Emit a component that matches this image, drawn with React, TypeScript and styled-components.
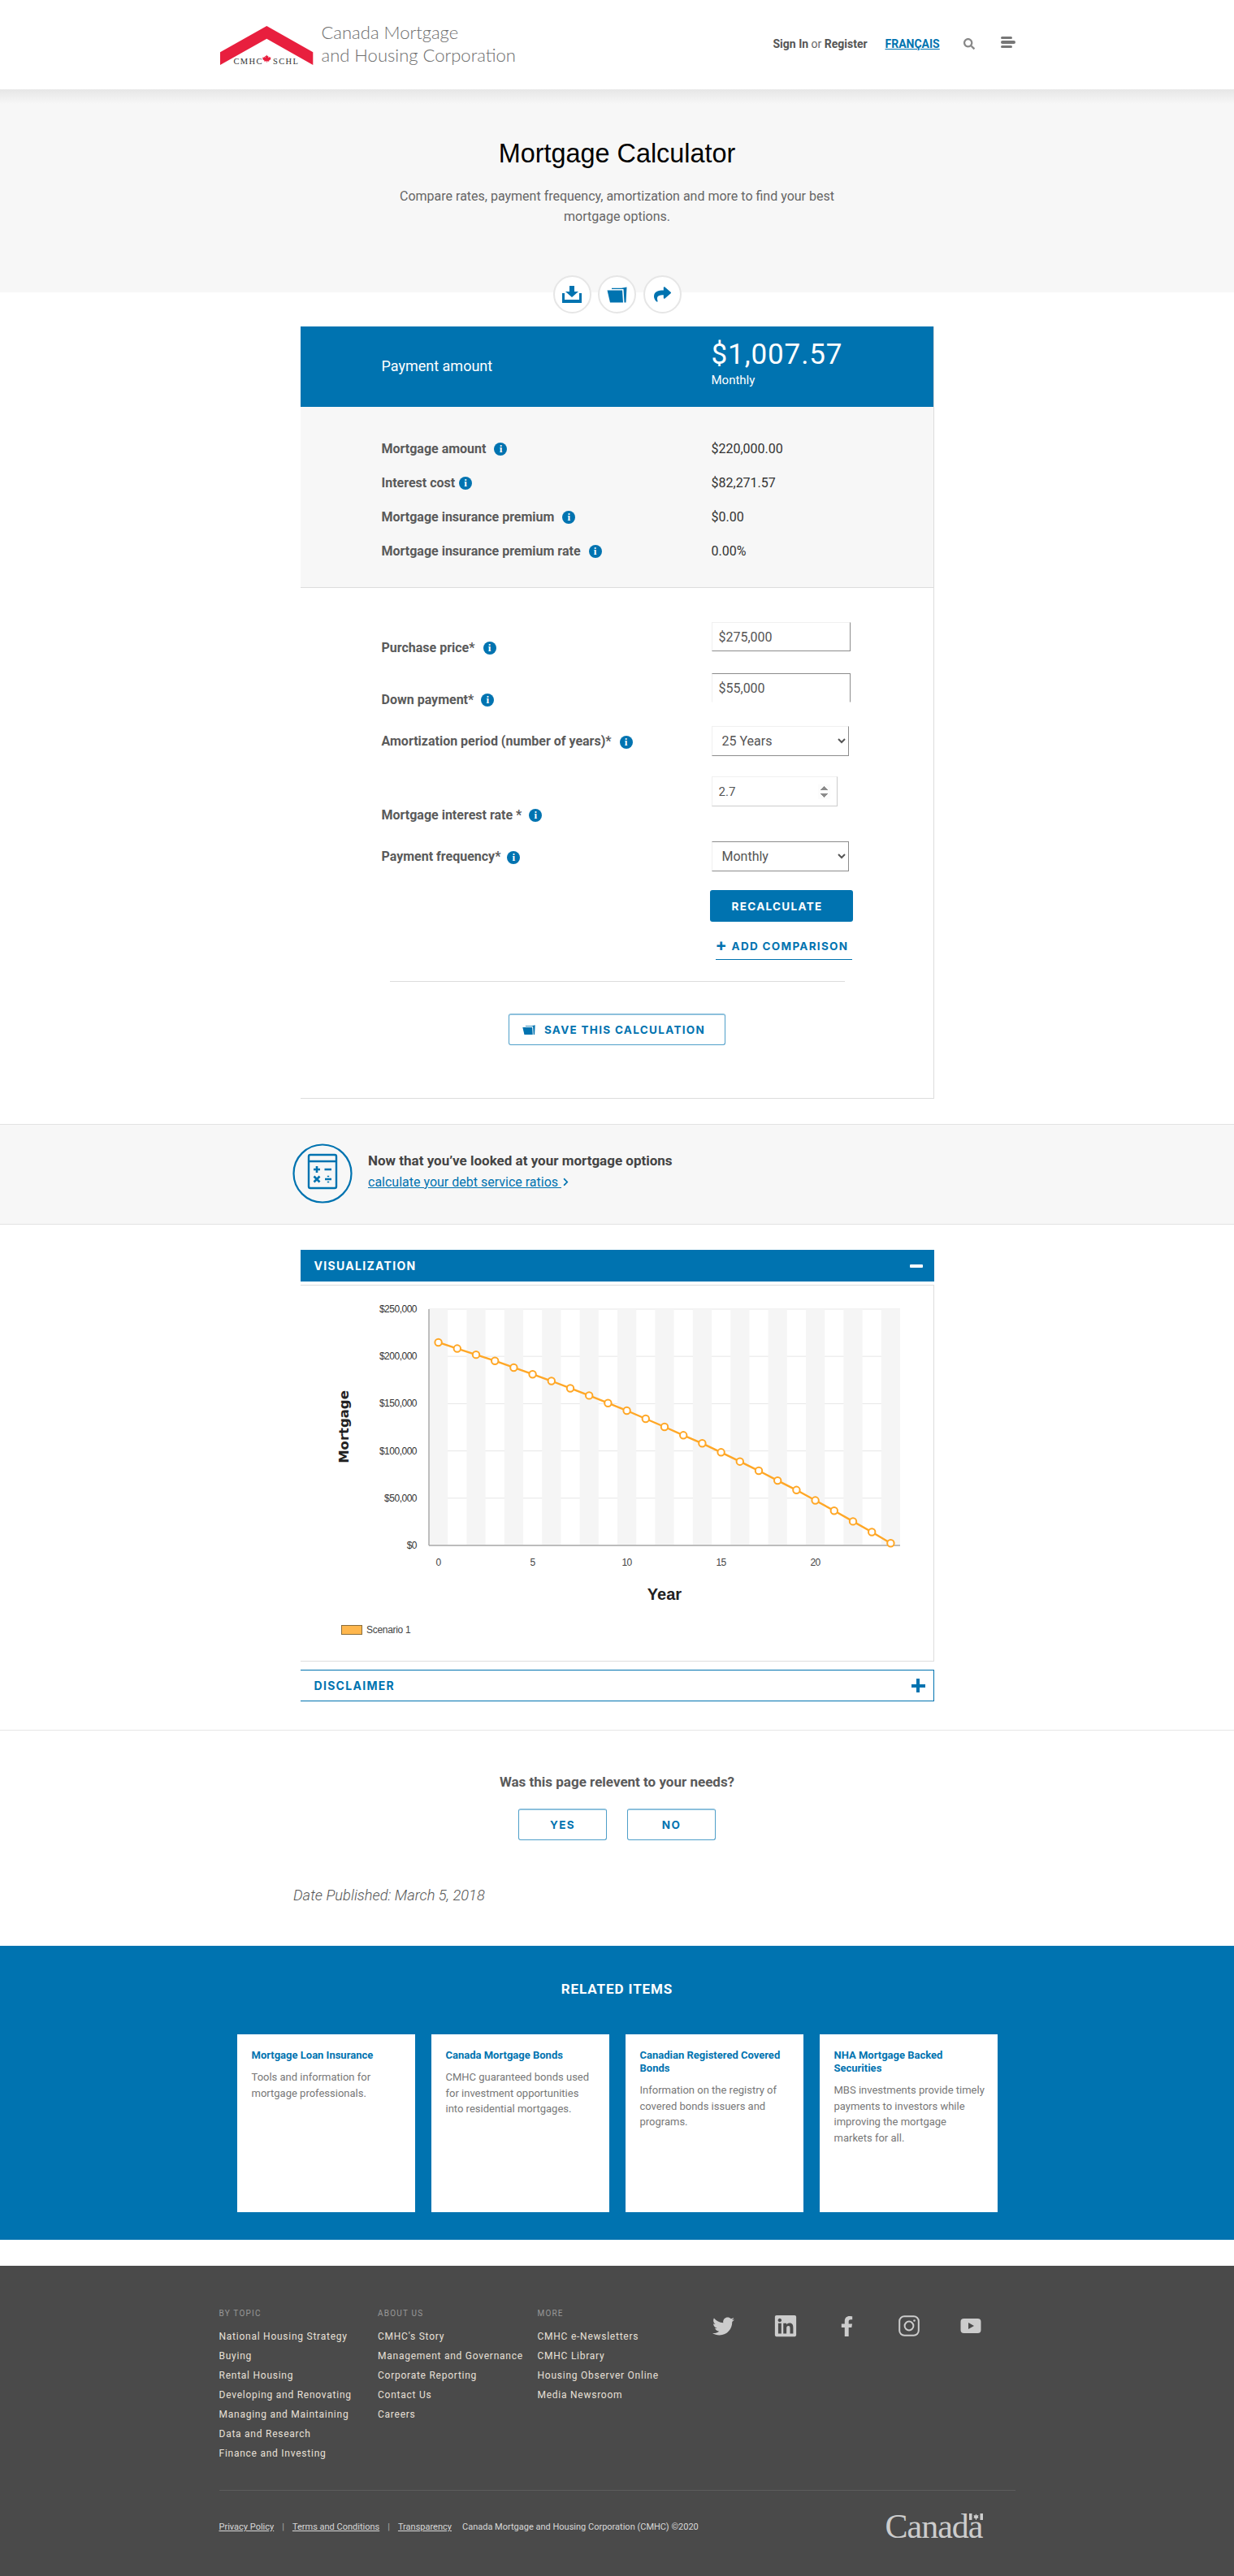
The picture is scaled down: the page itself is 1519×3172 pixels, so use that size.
import React from "react";
import styled, { createGlobalStyle } from "styled-components";
import { FaTwitter, FaLinkedin, FaFacebookF, FaSearch, FaShare, FaChevronRight } from "react-icons/fa";

const BLUE = "#0073b0";

const GlobalStyle = createGlobalStyle`
    html, body { margin: 0; padding: 0; background: #fff; }
    body { font-family: Roboto, "Liberation Sans", sans-serif; color: #555; }
    * { box-sizing: border-box; }
    a { color: inherit; }
`;

const balances = [
    214794, 208285, 201777, 195268, 188167, 181066, 173966, 166273, 158581, 150593, 142605, 134025, 125445, 116569,
    107989, 98521, 88758, 78995, 68640, 58580, 47633, 36687, 25444, 14201, 2367,
];

const summaryRows = [
    { label: "Mortgage amount", value: "$220,000.00", gap: 10 },
    { label: "Interest cost", value: "$82,271.57", gap: 5 },
    { label: "Mortgage insurance premium", value: "$0.00", gap: 10 },
    { label: "Mortgage insurance premium rate", value: "0.00%", gap: 10 },
];

const relatedItems = [
    { title: "Mortgage Loan Insurance", text: "Tools and information for mortgage professionals." },
    { title: "Canada Mortgage Bonds", text: "CMHC guaranteed bonds used for investment opportunities into residential mortgages." },
    { title: "Canadian Registered Covered Bonds", text: "Information on the registry of covered bonds issuers and programs." },
    { title: "NHA Mortgage Backed Securities", text: "MBS investments provide timely payments to investors while improving the mortgage markets for all." },
];

const footerColumns = [
    {
        title: "BY TOPIC",
        width: 195.5,
        links: ["National Housing Strategy", "Buying", "Rental Housing", "Developing and Renovating", "Managing and Maintaining", "Data and Research", "Finance and Investing"],
    },
    { title: "ABOUT US", width: 196.5, links: ["CMHC's Story", "Management and Governance", "Corporate Reporting", "Contact Us", "Careers"] },
    { title: "MORE", width: 191, links: ["CMHC e-Newsletters", "CMHC Library", "Housing Observer Online", "Media Newsroom"] },
];

const FolderIcon = ({ size }: { size: number }) => (
    <svg width={size} height={size * 0.8} viewBox="0 0 25 20" fill={BLUE}>
        <path d="M0.5 4.5 H19 L20 19.5 H4 Z" />
        <path d="M6 3 V1.8 H18 L24.5 0.5 L23.5 19.5 H21.5 L20.5 3 Z" />
    </svg>
);

const DownloadIcon = () => (
    <svg width="24" height="21" viewBox="0 0 24 21" fill={BLUE}>
        <path d="M9 0 H15 V7 H20 L12 14 L4 7 H9 Z" />
        <path d="M0 9 H3 V17 H21 V9 H24 V21 H0 Z" />
    </svg>
);

const MapleLeaf = () => (
    <path
        transform="translate(57.3 40.5) scale(0.68) translate(-57.3 -40.5)"
        d="M57.3 33 l1.5 2.8 1.6-.8-.6 3.6 2-2 .5 1.4 2.6-.4-.8 2.6 1 .6-3.8 3 .4 1.4-4-.5 0 2.5h-.8l0-2.5-4 .5.4-1.4-3.8-3 1-.6-.8-2.6 2.6.4.5-1.4 2 2-.6-3.6 1.6.8z"
        fill="#e81f3e"
    />
);

const Logo = () => (
    <svg width="115" height="48" viewBox="0 0 115 48">
        <polygon points="0,32.3 57.3,0 114.3,32.3 114.3,48 57.3,15.7 0,48" fill="#e81f3e" />
        <MapleLeaf />
        <text x="16.5" y="46.5" fontFamily="'Liberation Serif', serif" fontSize="10.5" fill="#333" textLength="35">CMHC</text>
        <text x="65" y="46.5" fontFamily="'Liberation Serif', serif" fontSize="10.5" fill="#333" textLength="31">SCHL</text>
    </svg>
);

const CalculatorIcon = () => (
    <svg width="74" height="74" viewBox="0 0 74 74" fill="none" stroke={BLUE}>
        <circle cx="37" cy="37" r="35.5" strokeWidth="2.2" />
        <rect x="20" y="14" width="34" height="41" rx="2" strokeWidth="2.4" />
        <line x1="20" y1="22" x2="54" y2="22" strokeWidth="2.4" />
        <path d="M26 32 H34 M30 28 V36 M39.5 32 H48 M26.5 40.5 L33.5 47.5 M33.5 40.5 L26.5 47.5 M40 44 H48" strokeWidth="2.6" />
        <path d="M44 39.8 V41.2 M44 46.8 V48.2" strokeWidth="2.4" />
    </svg>
);

const InstagramIcon = () => (
    <svg width="26" height="26" viewBox="0 0 26 26" fill="none" stroke="#ccc">
        <rect x="1.2" y="1.2" width="23.6" height="23.6" rx="6" strokeWidth="2" />
        <circle cx="13" cy="13" r="5.4" strokeWidth="2" />
        <circle cx="19.5" cy="6.5" r="1.3" fill="#ccc" stroke="none" />
    </svg>
);

const YoutubeIcon = () => (
    <svg width="26" height="20" viewBox="0 0 26 20">
        <rect x="0.5" y="1" width="25" height="18" rx="4" fill="#ccc" />
        <polygon points="10,6 17,10 10,14" fill="#4a4a4a" />
    </svg>
);

const CanadaFlag = () => (
    <svg width="17" height="8" viewBox="0 0 17 8" fill="#ccc">
        <rect x="0" y="0" width="3.5" height="8" />
        <rect x="13.5" y="0" width="3.5" height="8" />
        <path d="M8.5 0.5 L9.6 2.5 L11.5 2 L10.8 4.5 L12 5 L9 6.5 L9 8 L8 8 L8 6.5 L5 5 L6.2 4.5 L5.5 2 L7.4 2.5 Z" />
    </svg>
);

const Chart = () => {
    const plotLeft = 158;
    const plotRight = 738;
    const plotTop = 29;
    const plotBottom = 320;
    const slot = (plotRight - plotLeft) / 25;
    const toY = (v: number) => plotBottom - (v / 250000) * (plotBottom - plotTop);
    const toX = (i: number) => plotLeft + slot / 2 + slot * i;
    const points = balances.map((v, i) => `${toX(i)},${toY(v)}`).join(" ");
    const ticks = [0, 50000, 100000, 150000, 200000, 250000];

    return (
        <svg width="778" height="462" viewBox="0 0 778 462" fontFamily="'Liberation Sans', sans-serif">
            {ticks.map((t) => (
                <line key={t} x1={plotLeft} x2={plotRight} y1={toY(t)} y2={toY(t)} stroke="#e6e6e6" strokeWidth="1" />
            ))}
            {balances.map((_, i) =>
                i % 2 === 0 ? (
                    <rect key={i} x={plotLeft + slot * i} y={plotTop} width={slot} height={plotBottom - plotTop} fill="#f5f5f5" />
                ) : null,
            )}
            <line x1={plotLeft} x2={plotLeft} y1={plotTop} y2={plotBottom} stroke="#aaa" strokeWidth="1.5" />
            <line x1={plotLeft} x2={plotRight} y1={plotBottom} y2={plotBottom} stroke="#aaa" strokeWidth="1.5" />
            {ticks.map((t) => (
                <text key={t} x={plotLeft - 15} y={toY(t) + 4} textAnchor="end" fontSize="12" letterSpacing="-0.5" fill="#333">
                    {t === 0 ? "$0" : `$${t.toLocaleString("en-US")}`}
                </text>
            ))}
            {[0, 5, 10, 15, 20].map((t) => (
                <text key={t} x={toX(t)} y={345} textAnchor="middle" fontSize="12" letterSpacing="-0.5" fill="#444">
                    {t}
                </text>
            ))}
            <polyline points={points} fill="none" stroke="#ffa726" strokeWidth="2.4" />
            {balances.map((v, i) => (
                <circle key={i} cx={toX(i)} cy={toY(v)} r="4.2" fill="#fff" stroke="#ffa726" strokeWidth="2" />
            ))}
            <text x="448" y="387" textAnchor="middle" fontSize="20" fontWeight="700" fill="#222">
                Year
            </text>
            <text
                transform="translate(59 174) rotate(-90)"
                textAnchor="middle"
                fontFamily="'DejaVu Sans', sans-serif"
                fontSize="16.5"
                fontWeight="700"
                fill="#222"
            >
                Mortgage
            </text>
            <rect x="50.5" y="418.5" width="25" height="11" fill="#ffb74d" stroke="#8a6d3b" />
            <text x="81" y="428" fontSize="12" letterSpacing="-0.3" fill="#444">
                Scenario 1
            </text>
        </svg>
    );
};

const App = () => {
    return (
        <>
            <GlobalStyle />
            <Header>
                <HeaderInner>
                    <LogoLink>
                        <Logo />
                        <LogoText>
                            Canada Mortgage
                            <br />
                            and Housing Corporation
                        </LogoText>
                    </LogoLink>
                    <Nav>
                        <NavAuth>
                            <b>Sign In</b> or <b>Register</b>
                        </NavAuth>
                        <NavLang href="#">FRANÇAIS</NavLang>
                        <FaSearch size={14} color="#888" />
                        <MenuBars>
                            <i />
                            <i />
                            <i />
                        </MenuBars>
                    </Nav>
                </HeaderInner>
            </Header>

            <Hero>
                <HeroTitle>Mortgage Calculator</HeroTitle>
                <HeroText>Compare rates, payment frequency, amortization and more to find your best mortgage options.</HeroText>
            </Hero>
            <ActionRow>
                <ActionButton aria-label="download">
                    <DownloadIcon />
                </ActionButton>
                <ActionButton aria-label="open">
                    <FolderIcon size={25} />
                </ActionButton>
                <ActionButton aria-label="share">
                    <FaShare size={21} color={BLUE} />
                </ActionButton>
            </ActionRow>

            <Card>
                <PaymentBar>
                    <PaymentLabel>Payment amount</PaymentLabel>
                    <div>
                        <PaymentValue>$1,007.57</PaymentValue>
                        <PaymentPeriod>Monthly</PaymentPeriod>
                    </div>
                </PaymentBar>
                <Summary>
                    {summaryRows.map((row) => (
                        <SummaryRow key={row.label}>
                            <FieldLabel>
                                {row.label}
                                <InfoDot $gap={row.gap}>i</InfoDot>
                            </FieldLabel>
                            <SummaryValue>{row.value}</SummaryValue>
                        </SummaryRow>
                    ))}
                </Summary>
                <Form>
                    <FormRow $top={0}>
                        <FieldLabel $top={21}>
                            Purchase price*<InfoDot $gap={10}>i</InfoDot>
                        </FieldLabel>
                        <TextField defaultValue="$275,000" $edges="right-bottom" />
                    </FormRow>
                    <FormRow $top={22}>
                        <FieldLabel $top={22}>
                            Down payment*<InfoDot $gap={9}>i</InfoDot>
                        </FieldLabel>
                        <TextField defaultValue="$55,000" $edges="top-right" />
                    </FormRow>
                    <FormRow $top={23} $center>
                        <FieldLabel>
                            Amortization period (number of years)*<InfoDot $gap={10}>i</InfoDot>
                        </FieldLabel>
                        <SelectField defaultValue="25 Years" $edges="right-bottom">
                            <option>25 Years</option>
                        </SelectField>
                    </FormRow>
                    <FormRow $top={25}>
                        <FieldLabel $top={37}>
                            Mortgage interest rate *<InfoDot $gap={9}>i</InfoDot>
                        </FieldLabel>
                        <RateField type="number" defaultValue="2.7" step="0.1" />
                    </FormRow>
                    <FormRow $top={23} $center>
                        <FieldLabel>
                            Payment frequency*<InfoDot $gap={8}>i</InfoDot>
                        </FieldLabel>
                        <SelectField defaultValue="Monthly" $edges="all">
                            <option>Monthly</option>
                        </SelectField>
                    </FormRow>
                    <ActionsColumn>
                        <RecalculateButton>RECALCULATE</RecalculateButton>
                        <AddComparison>
                            <span>+</span> ADD COMPARISON
                        </AddComparison>
                    </ActionsColumn>
                    <FormDivider />
                    <SaveRow>
                        <SaveButton $width={267}>
                            <FolderIcon size={16} />
                            SAVE THIS CALCULATION
                        </SaveButton>
                    </SaveRow>
                </Form>
            </Card>

            <DebtBand>
                <DebtInner>
                    <CalculatorIcon />
                    <DebtCopy>
                        <DebtTitle>Now that you’ve looked at your mortgage options</DebtTitle>
                        <DebtLink>
                            <u>calculate your debt service ratios&nbsp;</u>
                            <FaChevronRight size={11} />
                        </DebtLink>
                    </DebtCopy>
                </DebtInner>
            </DebtBand>

            <AccordionHead>
                VISUALIZATION
                <MinusBar />
            </AccordionHead>
            <ChartPanel>
                <Chart />
            </ChartPanel>
            <DisclaimerHead>
                DISCLAIMER
                <PlusMark />
            </DisclaimerHead>

            <Feedback>
                <FeedbackQuestion>Was this page relevent to your needs?</FeedbackQuestion>
                <FeedbackButtons>
                    <OutlineButton $width={109}>YES</OutlineButton>
                    <OutlineButton $width={109}>NO</OutlineButton>
                </FeedbackButtons>
            </Feedback>
            <DatePublished>Date Published: March 5, 2018</DatePublished>

            <Related>
                <RelatedTitle>RELATED ITEMS</RelatedTitle>
                <RelatedGrid>
                    {relatedItems.map((item) => (
                        <RelatedCard key={item.title}>
                            <RelatedName>{item.title}</RelatedName>
                            <RelatedText>{item.text}</RelatedText>
                        </RelatedCard>
                    ))}
                </RelatedGrid>
            </Related>

            <Footer>
                <FooterInner>
                    <FooterTop>
                        {footerColumns.map((col) => (
                            <FooterColumn key={col.title} $width={col.width}>
                                <FooterHeading>{col.title}</FooterHeading>
                                {col.links.map((link) => (
                                    <FooterLink key={link}>{link}</FooterLink>
                                ))}
                            </FooterColumn>
                        ))}
                        <SocialRow>
                            <SocialSlot><FaTwitter size={27} /></SocialSlot>
                            <SocialSlot><FaLinkedin size={30} /></SocialSlot>
                            <SocialSlot><FaFacebookF size={25} /></SocialSlot>
                            <SocialSlot><InstagramIcon /></SocialSlot>
                            <SocialSlot><YoutubeIcon /></SocialSlot>
                        </SocialRow>
                    </FooterTop>
                    <FooterBottom>
                        <Legal>
                            <u>Privacy Policy</u>
                            <LegalSep>|</LegalSep>
                            <u>Terms and Conditions</u>
                            <LegalSep>|</LegalSep>
                            <u>Transparency</u>
                            <LegalCopy>Canada Mortgage and Housing Corporation (CMHC) ©2020</LegalCopy>
                        </Legal>
                        <CanadaMark>
                            Canada
                            <FlagSpot>
                                <CanadaFlag />
                            </FlagSpot>
                        </CanadaMark>
                    </FooterBottom>
                </FooterInner>
            </Footer>
        </>
    );
};

const Header = styled.header`
    height: 110px;
    background: #fff;
`;

const HeaderInner = styled.div`
    width: 980px;
    margin: 0 auto;
    height: 100%;
    display: flex;
    align-items: center;
    justify-content: space-between;
    padding-top: 1px;
`;

const LogoLink = styled.div`
    display: flex;
    align-items: center;
    gap: 10px;
    margin-left: 1px;
`;

const LogoText = styled.div`
    font-family: Lato, sans-serif;
    font-weight: 300;
    font-size: 22px;
    line-height: 28px;
    color: #6e6e6e;
    margin-top: -3px;
`;

const Nav = styled.nav`
    display: flex;
    align-items: center;
    font-size: 14px;
    margin-top: -3px;
`;

const NavAuth = styled.div`
    color: #666;
    width: 138px;
    white-space: nowrap;
    b {
        color: #555;
        font-weight: 700;
    }
`;

const NavLang = styled.a`
    font-weight: 700;
    font-size: 14px;
    color: ${BLUE};
    width: 96px;
`;

const MenuBars = styled.div`
    width: 18px;
    margin-left: 32px;
    margin-top: -4px;
    display: flex;
    flex-direction: column;
    gap: 2px;
    i {
        display: block;
        height: 3.5px;
        width: 14px;
        border-radius: 2px;
        background: #777;
    }
    i:nth-child(2) {
        width: 18px;
    }
`;

const Hero = styled.section`
    height: 250px;
    background: linear-gradient(#e6e6e6, #f7f7f7 18px);
    text-align: center;
    padding-top: 61px;
`;

const HeroTitle = styled.h1`
    margin: 0;
    font-family: "Liberation Sans", sans-serif;
    font-weight: 400;
    font-size: 32.4px;
    line-height: 36px;
    color: #000;
`;

const HeroText = styled.p`
    margin: 23px auto 0;
    width: 560px;
    font-size: 16px;
    line-height: 24.5px;
    color: #666;
`;

const ActionRow = styled.div`
    display: flex;
    justify-content: center;
    gap: 8.5px;
    margin-top: -21px;
`;

const ActionButton = styled.button`
    width: 47px;
    height: 47px;
    padding: 0;
    border-radius: 50%;
    background: #fff;
    border: 2px solid #e6e6e6;
    display: flex;
    align-items: center;
    justify-content: center;
`;

const Card = styled.section`
    width: 780px;
    margin: 16px auto 0;
    border-right: 1px solid #ddd;
    border-bottom: 1px solid #ddd;
`;

const PaymentBar = styled.div`
    height: 99px;
    background: ${BLUE};
    color: #fff;
    display: grid;
    grid-template-columns: 406px 1fr;
    padding-left: 100px;
    align-items: center;
`;

const PaymentLabel = styled.div`
    font-size: 18px;
    margin-top: -2px;
`;

const PaymentValue = styled.div`
    font-size: 35px;
    line-height: 38px;
    letter-spacing: 0.9px;
    margin-top: -8px;
`;

const PaymentPeriod = styled.div`
    font-size: 15px;
    line-height: 20px;
    margin-top: 2px;
`;

const Summary = styled.div`
    height: 223px;
    background: #f7f7f7;
    border-bottom: 1px solid #ddd;
    padding-top: 30px;
`;

const SummaryRow = styled.div`
    height: 42px;
    display: grid;
    grid-template-columns: 406px 1fr;
    padding-left: 100px;
    align-items: center;
`;

const SummaryValue = styled.div`
    font-size: 16px;
    color: #333;
`;

const FieldLabel = styled.div<{ $top?: number }>`
    display: flex;
    align-items: center;
    height: 20px;
    font-size: 16px;
    font-weight: 700;
    color: #5a5a5a;
    margin-top: ${(p) => p.$top ?? 0}px;
`;

const InfoDot = styled.span<{ $gap: number }>`
    display: inline-flex;
    width: 16px;
    height: 16px;
    margin-left: ${(p) => p.$gap}px;
    margin-top: 2px;
    border-radius: 50%;
    background: ${BLUE};
    color: #fff;
    font-family: "Liberation Serif", serif;
    font-weight: 700;
    font-size: 13px;
    align-items: center;
    justify-content: center;
`;

const Form = styled.div`
    padding-top: 42px;
    height: 628px;
`;

const FormRow = styled.div<{ $top: number; $center?: boolean }>`
    display: grid;
    grid-template-columns: 406px 1fr;
    padding-left: 100px;
    margin-top: ${(p) => p.$top}px;
    align-items: ${(p) => (p.$center ? "center" : "start")};
`;

const edgeBorder = (edges: string) => {
    const dark = "1.5px solid #8c8c8c";
    const light = "1px solid #f0f0f0";
    return `
        border-left: ${light};
        border-top: ${edges === "right-bottom" ? light : dark};
        border-right: ${dark};
        border-bottom: ${edges === "top-right" ? "1px solid #fff" : dark};
    `;
};

const TextField = styled.input<{ $edges: string }>`
    width: 171px;
    height: 36px;
    padding: 0 8px;
    font-family: Roboto, sans-serif;
    font-size: 16px;
    color: #555;
    background: #fff;
    border-radius: 0;
    ${(p) => edgeBorder(p.$edges)}
`;

const RateField = styled.input`
    width: 155px;
    height: 37px;
    padding: 0 8px;
    font-family: Roboto, sans-serif;
    font-size: 15px;
    color: #555;
    background: #fff;
    border-radius: 0;
    border: 1px solid #f0f0f0;
    border-right: 1px solid #ccc;
    border-bottom: 1px solid #ccc;
    &::-webkit-inner-spin-button {
        opacity: 1;
    }
`;

const SelectField = styled.select<{ $edges: string }>`
    width: 169px;
    height: 37px;
    padding: 0 8px;
    font-family: Roboto, sans-serif;
    font-size: 16px;
    color: #555;
    background: #fff;
    border-radius: 0;
    ${(p) => edgeBorder(p.$edges)}
`;

const ActionsColumn = styled.div`
    padding-left: 504px;
    margin-top: 23px;
`;

const buttonType = `
    font-family: Inter, sans-serif;
    font-weight: 700;
    font-size: 13.5px;
    letter-spacing: 1.3px;
    white-space: nowrap;
`;

const RecalculateButton = styled.button`
    display: block;
    width: 176px;
    height: 39px;
    padding: 0 10px 0 0;
    border: none;
    border-radius: 3px;
    background: ${BLUE};
    color: #fff;
    ${buttonType}
`;

const AddComparison = styled.div`
    width: 168px;
    height: 27px;
    margin: 20px 0 0 7px;
    border-bottom: 1px solid ${BLUE};
    color: ${BLUE};
    line-height: 20px;
    ${buttonType}
    span {
        font-size: 21px;
        line-height: 18px;
        vertical-align: -1px;
    }
`;

const FormDivider = styled.div`
    width: 560px;
    margin: 26px 0 0 110px;
    border-top: 1px solid #ddd;
`;

const SaveRow = styled.div`
    display: flex;
    justify-content: center;
    margin-top: 39px;
`;

const OutlineButton = styled.button<{ $width: number }>`
    width: ${(p) => p.$width}px;
    height: 39px;
    display: flex;
    align-items: center;
    justify-content: center;
    gap: 8px;
    background: #fff;
    border: 1px solid #4f9fc9;
    border-top: 2px solid #8cc0dc;
    border-radius: 3px;
    color: ${BLUE};
    ${buttonType}
`;

const SaveButton = styled(OutlineButton)`
    gap: 11px;
    padding: 0 7px 0 0;
`;

const DebtBand = styled.section`
    height: 124px;
    margin-top: 31px;
    background: #f7f7f7;
    border-top: 1px solid #e2e2e2;
    border-bottom: 1px solid #e2e2e2;
`;

const DebtInner = styled.div`
    width: 800px;
    height: 100%;
    display: flex;
    align-items: center;
    gap: 19px;
    margin-left: 360px;
    padding-bottom: 2px;
`;

const DebtCopy = styled.div`
    margin-top: -6px;
`;

const DebtTitle = styled.div`
    font-size: 17px;
    font-weight: 700;
    color: #444;
    line-height: 20px;
`;

const DebtLink = styled.a`
    display: flex;
    align-items: center;
    margin-top: 7px;
    font-size: 16px;
    line-height: 20px;
    color: ${BLUE};
`;

const AccordionHead = styled.div`
    width: 780px;
    height: 39px;
    margin: 31px auto 0;
    padding: 0 14px 0 17px;
    display: flex;
    align-items: center;
    justify-content: space-between;
    background: ${BLUE};
    color: #fff;
    font-family: Inter, sans-serif;
    font-weight: 700;
    font-size: 14px;
    letter-spacing: 1.3px;
`;

const MinusBar = styled.span`
    width: 16px;
    height: 4px;
    border-radius: 1px;
    background: #fff;
`;

const ChartPanel = styled.div`
    width: 780px;
    height: 464px;
    margin: 4px auto 0;
    border: 1px solid #ddd;
    border-width: 1px 1px 1px 0;
    svg {
        display: block;
    }
`;

const DisclaimerHead = styled.div`
    width: 780px;
    height: 39px;
    margin: 10px auto 0;
    padding: 0 10px 0 17px;
    display: flex;
    align-items: center;
    justify-content: space-between;
    background: #fff;
    border: 1px solid ${BLUE};
    border-left: none;
    color: ${BLUE};
    font-family: Inter, sans-serif;
    font-weight: 700;
    font-size: 14px;
    letter-spacing: 1.3px;
`;

const PlusMark = styled.span`
    width: 17px;
    height: 17px;
    background:
        linear-gradient(${BLUE}, ${BLUE}) center / 100% 4px no-repeat,
        linear-gradient(${BLUE}, ${BLUE}) center / 4px 100% no-repeat;
`;

const Feedback = styled.section`
    margin-top: 35px;
    border-top: 1px solid #e6e6e6;
    padding-top: 53px;
`;

const FeedbackQuestion = styled.div`
    text-align: center;
    font-size: 17px;
    font-weight: 700;
    line-height: 20px;
    color: #5a5a5a;
`;

const FeedbackButtons = styled.div`
    display: flex;
    justify-content: center;
    gap: 25px;
    margin-top: 23px;
`;

const DatePublished = styled.div`
    margin: 56px 0 0 361px;
    font-size: 18.3px;
    font-style: italic;
    font-weight: 300;
    line-height: 24px;
    color: #555;
`;

const Related = styled.section`
    margin-top: 50px;
    height: 362px;
    background: ${BLUE};
    padding-top: 43px;
`;

const RelatedTitle = styled.h2`
    margin: 0;
    text-align: center;
    color: #fff;
    font-size: 17px;
    line-height: 20px;
    font-weight: 700;
    letter-spacing: 0.9px;
`;

const RelatedGrid = styled.div`
    width: 936px;
    margin: 46px auto 0;
    display: grid;
    grid-template-columns: repeat(4, 219px);
    gap: 20px;
`;

const RelatedCard = styled.article`
    height: 219px;
    background: #fff;
    padding: 18px 14px 0 18px;
`;

const RelatedName = styled.h3`
    margin: 0;
    color: ${BLUE};
    font-size: 13px;
    line-height: 16px;
    font-weight: 700;
`;

const RelatedText = styled.p`
    margin: 9px 0 0;
    color: #777;
    font-size: 13px;
    line-height: 19.5px;
`;

const Footer = styled.footer`
    margin-top: 32px;
    height: 383px;
    background: #4a4a4a;
`;

const FooterInner = styled.div`
    width: 980px;
    margin: 0 auto;
    padding-top: 51px;
`;

const FooterTop = styled.div`
    display: flex;
    height: 226px;
    border-bottom: 1px solid #5c5c5c;
`;

const FooterColumn = styled.div<{ $width: number }>`
    width: ${(p) => p.$width}px;
`;

const FooterHeading = styled.div`
    font-size: 10px;
    line-height: 16px;
    letter-spacing: 1.2px;
    color: #999;
    margin-bottom: 8px;
`;

const FooterLink = styled.div`
    font-size: 12px;
    line-height: 24px;
    letter-spacing: 0.75px;
    color: #e8e0d8;
    white-space: nowrap;
`;

const SocialRow = styled.div`
    display: grid;
    grid-template-columns: repeat(5, 76px);
    height: 30px;
    margin-top: 8px;
`;

const SocialSlot = styled.div`
    display: flex;
    align-items: center;
    justify-content: center;
    color: #ccc;
`;

const FooterBottom = styled.div`
    display: flex;
    justify-content: space-between;
    padding: 25px 40px 0 0;
`;

const Legal = styled.div`
    font-size: 11px;
    color: #d8d8d8;
    padding-top: 13px;
`;

const LegalSep = styled.span`
    margin: 0 10px;
    color: #aaa;
`;

const LegalCopy = styled.span`
    margin-left: 13px;
`;

const CanadaMark = styled.div`
    position: relative;
    font-family: "Liberation Serif", serif;
    font-size: 42px;
    line-height: 38px;
    letter-spacing: -1px;
    color: #ccc;
`;

const FlagSpot = styled.span`
    position: absolute;
    right: 0;
    top: -3px;
    line-height: 0;
`;

export default App;
